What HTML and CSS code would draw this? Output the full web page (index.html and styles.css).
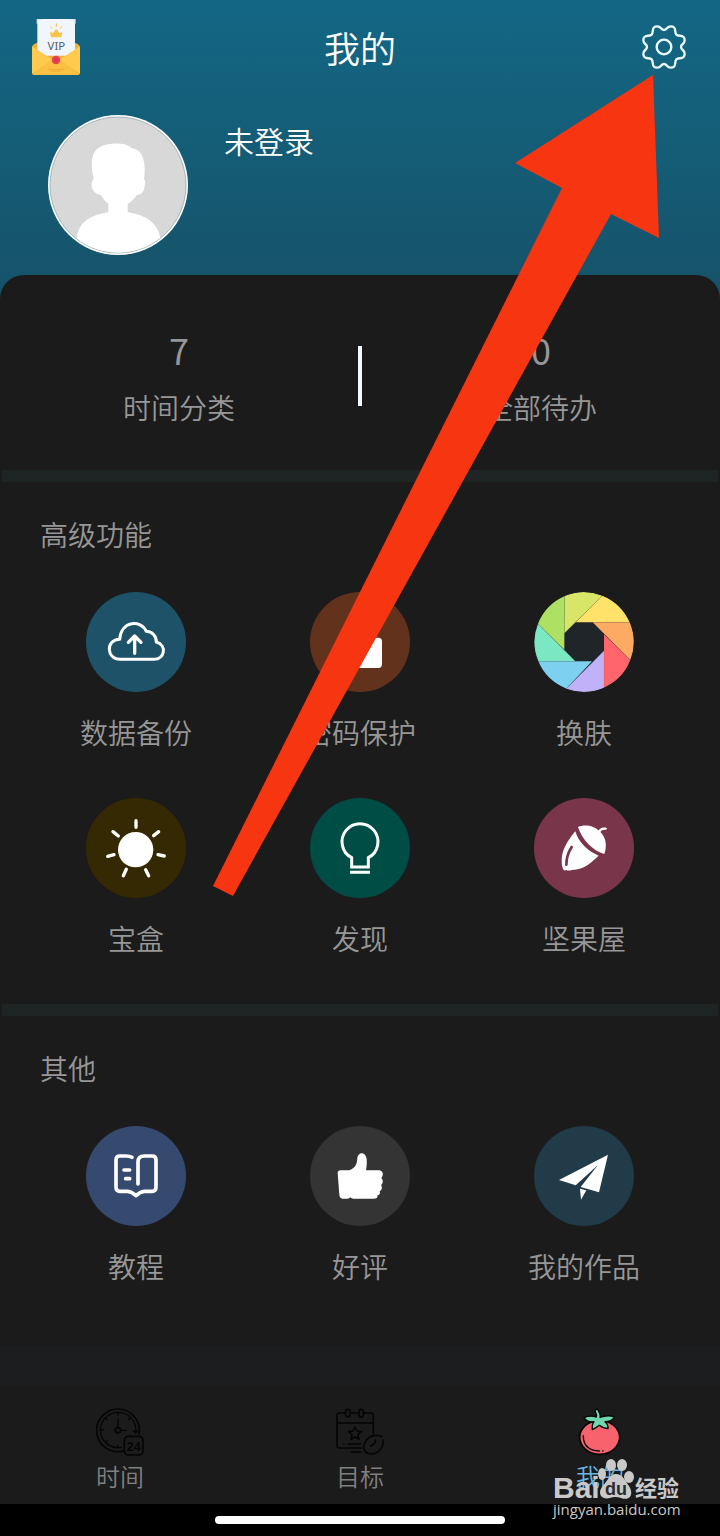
FILE: index.html
```html
<!DOCTYPE html>
<html lang="zh-CN">
<head>
<meta charset="utf-8">
<meta name="viewport" content="width=device-width, initial-scale=1">
<title>我的</title>
<link rel="stylesheet" href="styles.css">
</head>
<body>
<div class="app">
  <header class="hero">
    <div class="topbar">
      <button class="icon-button" type="button" aria-label="VIP">
        <svg class="vip" viewBox="0 0 144 168">
          <path d="M0 84Q4 74 16 71H128Q140 74 144 84V160Q144 168 136 168H8Q0 168 0 160Z" fill="#eeb23c"/>
          <path d="M16 0H129V110H16Z" fill="#f1f5fc"/>
          <path d="M16 14V0H30M129 14V0H115" fill="none" stroke="#d5e1ee" stroke-width="4"/>
          <path d="M0 82L67 125L0 164ZM144 82L77 125L144 164Z" fill="#ffca4e"/>
          <path d="M2 166L66 120Q72 116 78 120L142 166Q138 168 134 168H10Q4 168 2 166Z" fill="#fbc143" stroke="#e6a935" stroke-width="1"/>
          <path d="M54 38L62 43L73 30L83 43L91 38L88 55H57Z" fill="#f8c544"/>
          <path d="M73 13V24M55 22L61 29M90 22L84 29" stroke="#f8c544" stroke-width="3"/>
          <text x="73" y="94" text-anchor="middle" class="vip-text">VIP</text>
          <circle cx="72" cy="123" r="13" fill="#e74655"/>
          <circle cx="72" cy="123" r="6" fill="#d93652"/>
          <path d="M46 151H98M57 156H86" stroke="#e4a52e" stroke-width="2"/>
        </svg>
      </button>
      <h1 class="title">我的</h1>
      <button class="icon-button" type="button" aria-label="设置">
        <svg class="gear" viewBox="-66 -66 132 132" fill="none" stroke="#e9fbff" stroke-width="7">
          <path d="M0-51C10-51 8-62 20-62C40-62 30-44 37-37C44-30 62-40 62-20C62-8 51-10 51 0C51 10 62 8 62 20C62 40 44 30 37 37C30 44 40 62 20 62C8 62 10 51 0 51C-10 51-8 62-20 62C-40 62-30 44-37 37C-44 30-62 40-62 20C-62 8-51 10-51 0C-51-10-62-8-62-20C-62-40-44-30-37-37C-30-44-40-62-20-62C-8-62-10-51 0-51Z"/>
          <circle r="22"/>
        </svg>
      </button>
    </div>
    <div class="profile">
      <svg class="avatar" viewBox="0 0 420 420" role="img" aria-label="头像">
        <defs><clipPath id="face"><circle cx="210" cy="210" r="203"/></clipPath></defs>
        <circle cx="210" cy="210" r="210" fill="#fff"/>
        <circle cx="210" cy="210" r="204" fill="#d8d8d8" stroke="#7f9da8" stroke-width="2"/>
        <path clip-path="url(#face)" fill="#fff" d="M86 375C88 320 130 300 181 292V266Q165 254 158 239C140 240 126 218 132 200Q134 193 137 192C128 150 126 110 160 94C180 84 235 80 250 100C285 100 295 145 288 192Q294 198 290 215C286 234 278 239 267 239Q255 258 239 266V292C290 300 330 320 338 375L300 420H110Z"/>
      </svg>
      <span class="username">未登录</span>
    </div>
  </header>

  <main class="panel">
    <section class="stats">
      <div class="stat"><span class="stat-value">7</span><span class="label">时间分类</span></div>
      <div class="stat-rule"></div>
      <div class="stat"><span class="stat-value">0</span><span class="label">全部待办</span></div>
    </section>
    <div class="band"></div>

    <section class="group">
      <h2 class="label">高级功能</h2>
      <div class="grid">
        <button class="item" type="button">
          <svg class="badge backup" viewBox="0 0 300 300" fill="none" stroke="#fff" stroke-width="9" stroke-linejoin="round" stroke-linecap="round">
            <path d="M102 202C61 202 58 143 101 142C106 86 164 82 181 118C198 118 212 133 211 150C244 160 236 202 204 202Z"/>
            <path d="M146 134V184M127 151L146 132L165 151" stroke-width="10"/>
          </svg>
          <span class="label">数据备份</span>
        </button>
        <button class="item" type="button">
          <svg class="badge lock" viewBox="0 0 300 300">
            <rect x="84" y="137" width="132" height="91" rx="11" fill="#fff"/>
            <path d="M120 140V116Q120 92 150 92Q174 92 176 116V140" fill="none" stroke="#fff" stroke-width="12"/>
          </svg>
          <span class="label">密码保护</span>
        </button>
        <button class="item" type="button">
          <svg class="badge skin" viewBox="0 0 300 300" stroke="#555" stroke-opacity=".25" stroke-width="1">
            <path d="M92 12A150 150 0 0 1 205 11L91 124Z" fill="#d8e667"/>
            <path d="M205 11A150 150 0 0 1 287 91H125Z" fill="#ffe26a"/>
            <path d="M287 91A150 150 0 0 1 289 204L176 91Z" fill="#fdaa65"/>
            <path d="M289 204A150 150 0 0 1 210 287V127Z" fill="#ff656a"/>
            <path d="M210 287A150 150 0 0 1 97 290L210 176Z" fill="#c1b1f8"/>
            <path d="M97 290A150 150 0 0 1 13 208H174Z" fill="#7dd0ef"/>
            <path d="M13 208A150 150 0 0 1 12 95L124 208Z" fill="#7ce7c3"/>
            <path d="M12 95A150 150 0 0 1 92 12L91 173Z" fill="#aee064"/>
          </svg>
          <span class="label">换肤</span>
        </button>
        <button class="item" type="button">
          <svg class="badge box" viewBox="0 0 300 300">
            <circle cx="149" cy="155" r="53" fill="#fff"/>
            <path d="M150 68V88M81 101L97 114M218 101L203 113M65 175L84 170M216 170L235 174M121 214L112 233M179 215L188 233" stroke="#fff" stroke-width="10" stroke-linecap="round"/>
          </svg>
          <span class="label">宝盒</span>
        </button>
        <button class="item" type="button">
          <svg class="badge discover" viewBox="0 0 300 300" fill="none" stroke="#fff" stroke-width="9">
            <path d="M125 207V179A54 54 0 1 1 175 179V207ZM120 223H180"/>
          </svg>
          <span class="label">发现</span>
        </button>
        <button class="item" type="button">
          <svg class="badge nut" viewBox="0 0 300 300" fill="#fff">
            <path d="M132 87C150 78 180 82 197 100C218 118 219 148 211 168C178 160 144 125 132 87Z"/>
            <path d="M195 103Q199 90 215 92" fill="none" stroke="#fff" stroke-width="7" stroke-linecap="round"/>
            <path d="M124 100C134 135 164 161 194 173C175 190 152 215 114 216Q104 219 97 216Q88 220 86 210C80 180 82 150 124 100Z"/>
            <path d="M113 147Q97 172 97 200" fill="none" stroke="#793549" stroke-width="8" stroke-linecap="round"/>
          </svg>
          <span class="label">坚果屋</span>
        </button>
      </div>
    </section>
    <div class="band"></div>

    <section class="group group-last">
      <h2 class="label">其他</h2>
      <div class="grid">
        <button class="item" type="button">
          <svg class="badge guide" viewBox="0 0 300 300" fill="none" stroke="#fff" stroke-width="11" stroke-linecap="round" stroke-linejoin="round">
            <path d="M138 94Q132 90 120 90H102Q90 90 90 102V184Q90 196 102 196H125Q138 197 150 209Q162 197 175 196H198Q210 196 210 184V102Q210 90 198 90H175Q156 90 156 108V174M114 132H131M119 158H131"/>
          </svg>
          <span class="label">教程</span>
        </button>
        <button class="item" type="button">
          <svg class="badge praise" viewBox="0 0 300 300" fill="#fff">
            <path d="M83 141Q83 133 92 133H118C138 125 141 112 142 96C144 76 168 76 170 100C171 112 170 122 168 133H208C222 135 220 150 214 156C221 163 219 173 213 177C219 186 214 193 209 196C212 204 207 208 202 208C204 216 198 218 192 218H130Q124 218 121 214Q118 218 112 218H97Q89 216 88 206Z"/>
          </svg>
          <span class="label">好评</span>
        </button>
        <button class="item" type="button">
          <svg class="badge works" viewBox="0 0 300 300" fill="#fff">
            <path d="M222 86L75 162L125 178L192 117L140 183L195 199ZM138 188L157 193L141 221Z"/>
          </svg>
          <span class="label">我的作品</span>
        </button>
      </div>
    </section>
  </main>

  <nav class="tabbar">
    <a class="tab" href="#time">
      <svg class="tab-icon" viewBox="0 0 144 144" fill="none" stroke="#050505" stroke-width="5" stroke-linecap="round" stroke-linejoin="round">
        <path d="M82 129A64 64 0 1 1 129 78"/>
        <path d="M76 118A53 53 0 1 1 119 70M112 68L119 75L125 68" stroke-width="4"/>
        <path d="M66 16V22M16 66H22M66 112V117M31 31L34 35M101 31L98 35M31 101L34 98M66 32V58M74 67H91" stroke-width="4"/>
        <circle cx="66" cy="67" r="8"/>
        <rect x="85" y="85" width="56" height="56" rx="12"/>
        <text x="113" y="128" text-anchor="middle" class="day-text">24</text>
      </svg>
      <span>时间</span>
    </a>
    <a class="tab" href="#goals">
      <svg class="tab-icon" viewBox="0 0 144 144" fill="none" stroke="#050505" stroke-width="5" stroke-linecap="round" stroke-linejoin="round">
        <path d="M26 15H10Q3 15 3 22V112Q3 120 10 120H76M45 15H66M86 15H105Q112 15 112 22V78M3 45H111"/>
        <rect x="29" y="4" width="13" height="23" rx="6"/>
        <rect x="69" y="4" width="13" height="23" rx="6"/>
        <path d="M57 57L63 69L76 71L66 80L69 94L57 87L45 94L48 80L38 71L51 69Z"/>
        <path d="M36 108H74M23 108H24M46 132H74"/>
        <path d="M141 96C145 118 126 138 105 138C80 137 78 112 91 97C102 82 124 78 136 86M118 96Q120 107 104 114"/>
      </svg>
      <span>目标</span>
    </a>
    <a class="tab tab-active" href="#me" aria-current="page">
      <svg class="tab-icon" viewBox="0 0 144 144" stroke="#050505" stroke-width="5" stroke-linecap="round" stroke-linejoin="round">
        <ellipse cx="71" cy="88" rx="60" ry="51" fill="#f7626d"/>
        <path d="M22 83Q21 126 70 129M80 129H81" fill="none" stroke-width="4"/>
        <path d="M61 27C64 16 55 12 58 7C60 2 66 3 67 8Q75 22 72 28Q96 19 115 27Q109 41 87 41Q97 49 96 62Q82 62 70 52Q62 59 49 65Q47 50 54 41Q34 44 24 29Q42 21 61 27Z" fill="#6fd6ae" stroke-width="4"/>
      </svg>
      <span>我的</span>
    </a>
  </nav>
  <footer class="home-area"><div class="home-bar"></div></footer>

  <svg class="arrow" viewBox="213 75 446 821" aria-hidden="true">
    <path d="M653 75L515 163L562 188L213 886L233 896L611 214L659 238Z" fill="#f73511"/>
  </svg>
  <svg class="watermark" viewBox="0 0 132 64" fill="#c9c9c9">
    <ellipse cx="50" cy="16" rx="4" ry="6"/>
    <ellipse cx="59" cy="7" rx="5" ry="6"/>
    <ellipse cx="70" cy="7" rx="5" ry="6"/>
    <ellipse cx="77" cy="19" rx="5" ry="6"/>
    <path d="M64 16C71 16 73 23 77 28C83 38 76 43 69 40Q63 38 58 40C50 42 45 36 50 29C55 24 57 16 64 16Z"/>
    <text x="1" y="40" class="wm-brand">Bai</text>
    <text x="64" y="37" text-anchor="middle" class="wm-du">du</text>
    <text x="83" y="38" class="wm-cn">经验</text>
    <text x="1" y="57" class="wm-url">jingyan.baidu.com</text>
  </svg>
</div>
</body>
</html>
```
FILE: styles.css
```css
* {
  box-sizing: border-box;
}

body {
  margin: 0;
  background: #000;
  color: #979797;
  font-family: "Noto Sans CJK SC", sans-serif;
  font-weight: 350;
}

h1,
h2 {
  margin: 0;
  font-weight: inherit;
}

button {
  padding: 0;
  border: 0;
  background: none;
  color: inherit;
  font: inherit;
}

svg {
  display: block;
}

.app {
  position: relative;
  display: flex;
  flex-direction: column;
  min-height: 100vh;
  overflow: hidden;
}

.hero {
  padding-bottom: 24px;
  background: linear-gradient(#136785, #165268);
}

.topbar {
  display: flex;
  align-items: center;
  justify-content: space-between;
  height: 93px;
  padding: 0 32px;
}

.vip {
  width: 48px;
  height: 56px;
}

.vip-text {
  fill: #555b66;
  font: 34px "Noto Sans", sans-serif;
}

.title {
  color: #fff;
  font-size: 36px;
  line-height: 48px;
}

.gear {
  width: 48px;
  height: 44px;
}

.profile {
  display: flex;
  gap: 36px;
  padding: 22px 48px 20px;
}

.avatar {
  width: 140px;
  height: 140px;
}

.username {
  color: #fff;
  font-size: 30px;
  line-height: 50px;
}

.panel {
  flex: 1;
  margin-top: -24px;
  border-radius: 24px 24px 0 0;
  background: #1b1b1b;
}

.label {
  font-size: 28px;
  line-height: 40px;
}

.stats {
  display: flex;
  align-items: center;
  height: 195px;
  padding-top: 6px;
}

.stat {
  display: flex;
  flex: 1;
  flex-direction: column;
  align-items: center;
  gap: 18px;
  padding-top: 4px;
}

.stat-value {
  font-size: 36px;
  font-weight: 400;
  line-height: 40px;
}

.stat-rule {
  width: 4px;
  height: 60px;
  background: #f4faff;
}

.band {
  height: 12px;
  margin: 0 2px;
  background: #1f2425;
}

.group {
  padding: 32px 24px 46px;
}

.group h2 {
  padding-left: 16px;
  margin-bottom: 38px;
}

.group-last {
  padding-bottom: 60px;
}

.grid {
  display: grid;
  grid-template-columns: repeat(3, 1fr);
  row-gap: 46px;
}

.item {
  display: flex;
  flex-direction: column;
  align-items: center;
  gap: 20px;
}

.badge {
  width: 100px;
  height: 100px;
  border-radius: 50%;
}

.backup { background: #1e5268; }
.lock { background: #63321c; }
.skin { background: #1f2528; }
.box { background: #352903; }
.discover { background: #004d46; }
.nut { background: #793549; }
.guide { background: #36496f; }
.praise { background: #343434; }
.works { background: #213b49; }

.tabbar {
  display: flex;
  height: 158px;
  padding-top: 62px;
  background: linear-gradient(#1c1d1f 40px, #1b1b1b 40px);
}

.tab {
  display: flex;
  flex: 1;
  flex-direction: column;
  align-items: center;
  gap: 4px;
  color: #808080;
  font-size: 24px;
  line-height: 32px;
  text-decoration: none;
}

.tab-active {
  color: #68b7e2;
}

.tab-icon {
  width: 48px;
  height: 48px;
}

.day-text {
  fill: #050505;
  stroke: none;
  font: bold 38px "Liberation Sans", sans-serif;
}

.home-area {
  display: flex;
  justify-content: center;
  height: 32px;
  padding-top: 12px;
  background: #000;
}

.home-bar {
  width: 290px;
  height: 8px;
  border-radius: 4px;
  background: #fff;
}

.arrow {
  position: absolute;
  top: 75px;
  right: 61px;
  width: 446px;
  height: 821px;
  pointer-events: none;
}

.watermark {
  position: absolute;
  right: 36px;
  bottom: 14px;
  width: 132px;
  height: 64px;
  pointer-events: none;
}

.wm-brand {
  font: bold 30px "Liberation Sans", sans-serif;
}

.wm-du {
  fill: #2b2b2b;
  font: bold 18px "Liberation Sans", sans-serif;
}

.wm-cn {
  font: bold 22px "Noto Sans CJK SC", sans-serif;
}

.wm-url {
  font: 15px "Open Sans", sans-serif;
}
```
